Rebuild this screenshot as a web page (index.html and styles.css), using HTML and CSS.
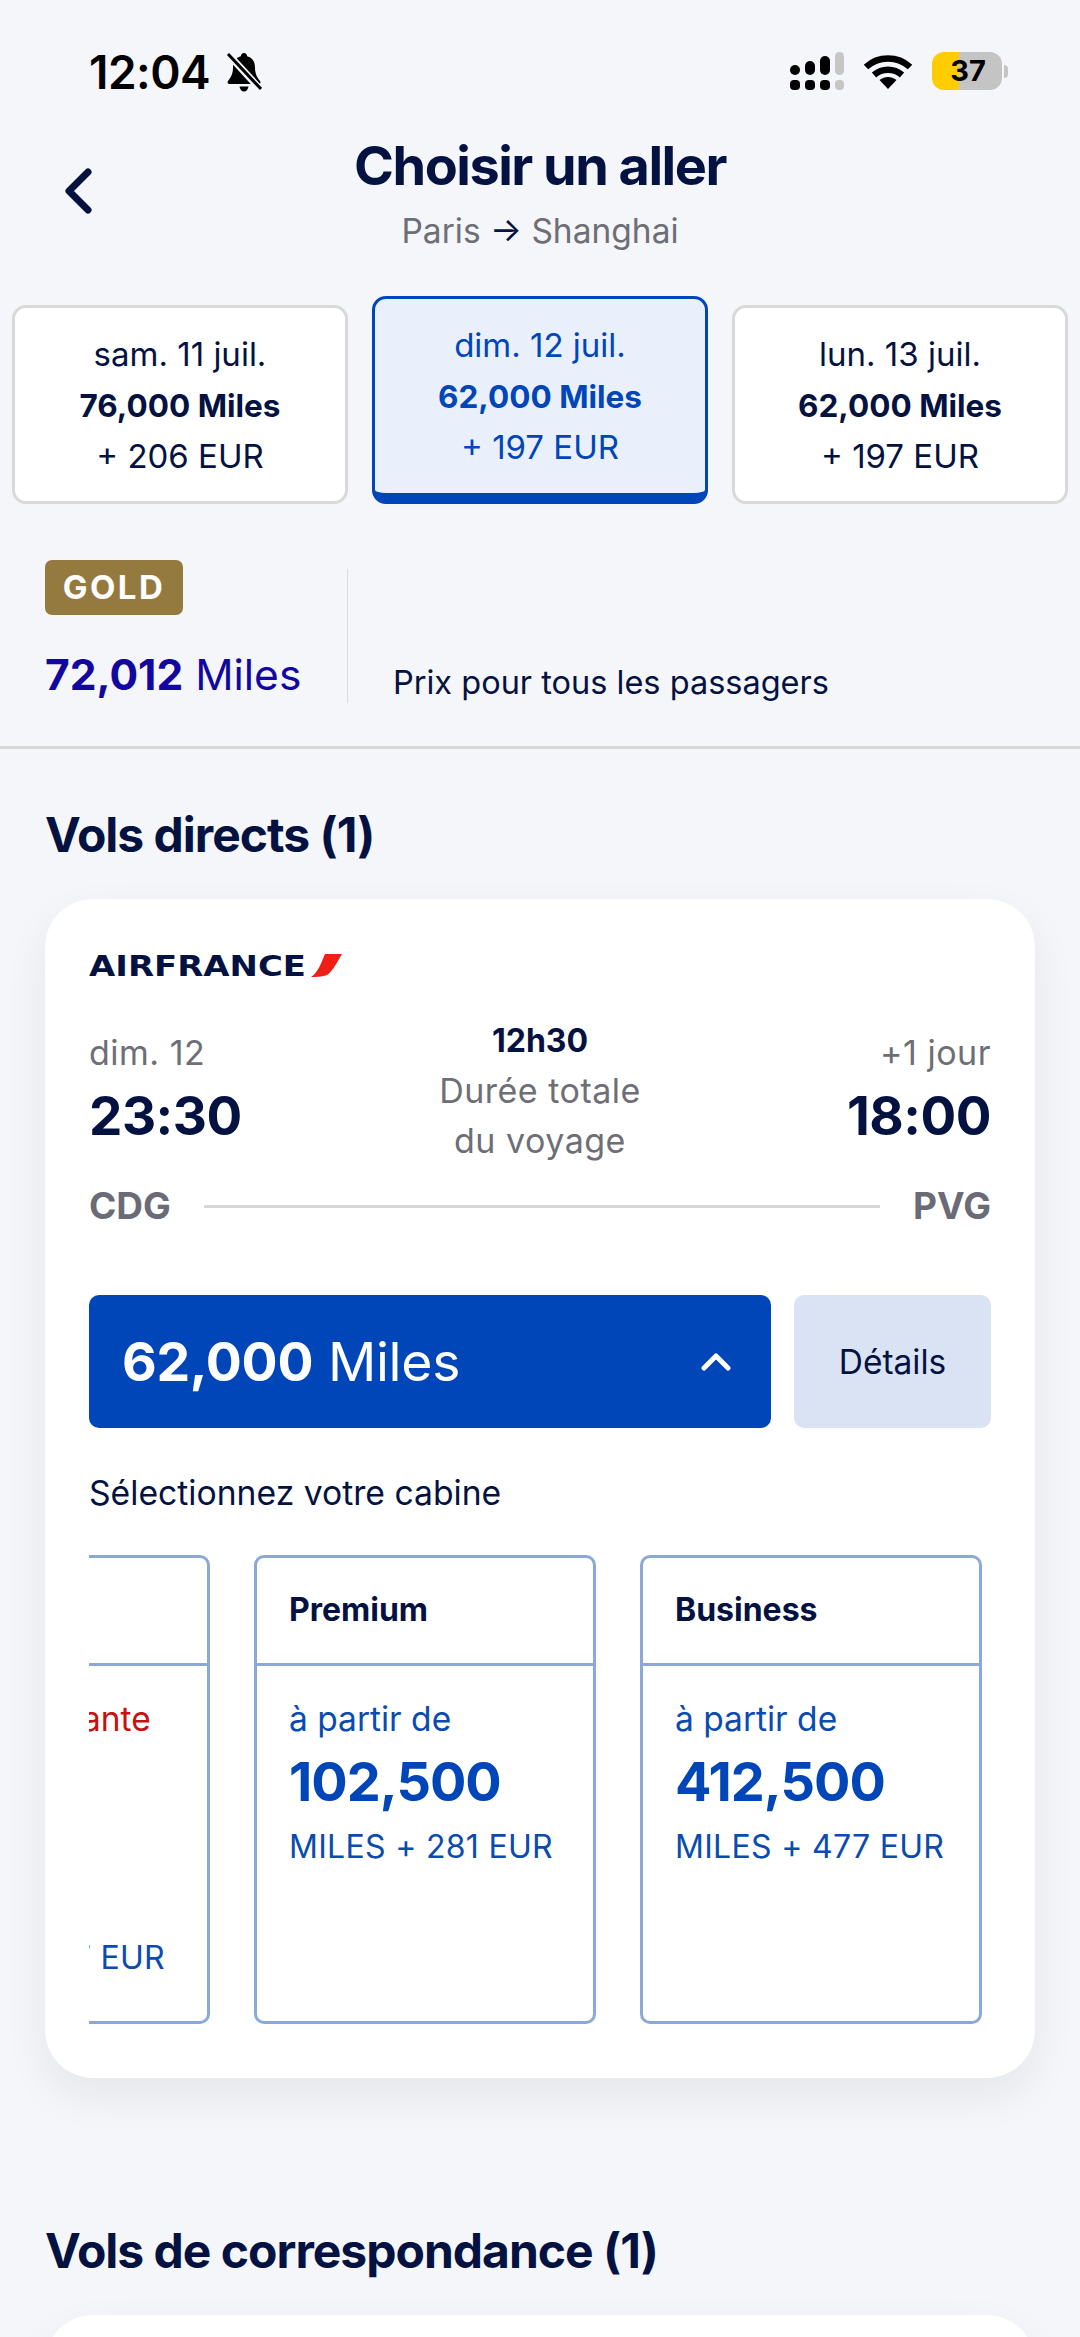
FILE: index.html
```html
<!DOCTYPE html>
<html lang="fr">
<head>
<meta charset="utf-8">
<title>Choisir un aller</title>
<link rel="stylesheet" href="styles.css">
</head>
<body>
<div class="status">
  <span class="clock">12:04</span>
  <svg class="bell" viewBox="0 0 36 39" aria-hidden="true">
    <path d="M18 0c2 0 3 1.500 3.200 3.300C26.500 4.700 29 9 29 14.500c0 6 1.800 9.500 5 13.500 1 1.500.2 3-1.500 3H3.500C1.800 31 1 29.500 2 28c3.200-4 5-7.500 5-13.500C7 9 9.500 4.700 14.800 3.300 15 1.500 16 0 18 0z" fill="#000"/>
    <path d="M13.500 33.500h9c-.5 3-2.300 5-4.500 5s-4-2-4.500-5z" fill="#000"/>
    <path d="M2 1l33 36" stroke="#f5f6f9" stroke-width="7" fill="none"/>
    <path d="M2 1l33 35" stroke="#000" stroke-width="3" fill="none"/>
  </svg>
  <span class="status-gap"></span>
  <svg class="signal" viewBox="0 0 54 38" aria-hidden="true">
    <rect x="0" y="13" width="10" height="10" rx="5" fill="#000"/>
    <rect x="15" y="9" width="10" height="14" rx="5" fill="#000"/>
    <rect x="30" y="4" width="10" height="19" rx="5" fill="#000"/>
    <rect x="45" y="0" width="9" height="23" rx="4.500" fill="#c6c6c6"/>
    <rect x="0" y="28" width="10" height="10" rx="4" fill="#000"/>
    <rect x="15" y="28" width="10" height="10" rx="4" fill="#000"/>
    <rect x="30" y="28" width="10" height="10" rx="4" fill="#000"/>
    <rect x="45" y="28" width="9" height="10" rx="4" fill="#c6c6c6"/>
  </svg>
  <svg class="wifi" viewBox="0 0 48 34" aria-hidden="true">
    <path d="M2 12C14 .5 34 .5 46 12" stroke="#000" stroke-width="6.500" fill="none"/>
    <path d="M10 20c8-7 20-7 28 0" stroke="#000" stroke-width="6.500" fill="none"/>
    <path d="M15.500 25c5-4 12-4 17 0L24 34z" fill="#000"/>
  </svg>
  <div class="battery"><span class="battery-level">37</span></div>
  <span class="battery-cap"></span>
</div>

<header class="header">
  <svg class="back" viewBox="0 0 28 46" aria-hidden="true">
    <path d="M24 4L5 23l19 19" stroke="#041241" stroke-width="7" stroke-linecap="round" stroke-linejoin="round" fill="none"/>
  </svg>
  <div class="heading">
    <h1 class="title">Choisir un aller</h1>
    <p class="route">Paris <span class="route-arrow">→</span> Shanghai</p>
  </div>
</header>

<div class="dates">
  <div class="date">
    <span>sam. 11 juil.</span>
    <strong>76,000 Miles</strong>
    <span>+ 206 EUR</span>
  </div>
  <div class="date date-active">
    <span>dim. 12 juil.</span>
    <strong>62,000 Miles</strong>
    <span>+ 197 EUR</span>
  </div>
  <div class="date">
    <span>lun. 13 juil.</span>
    <strong>62,000 Miles</strong>
    <span>+ 197 EUR</span>
  </div>
</div>

<section class="wallet">
  <div class="wallet-left">
    <span class="badge">GOLD</span>
    <p class="balance"><b>72,012</b> Miles</p>
  </div>
  <p class="note">Prix pour tous les passagers</p>
</section>

<h2 class="section-title first">Vols directs (1)</h2>
<article class="card">
  <div class="logo">
    <span class="logo-word">AIRFRANCE</span>
    <svg class="logo-flag" viewBox="0 0 31 23" aria-hidden="true">
      <path d="M14 0H31C28 5 24 13 19 18.500 16 22 11 23 0 23 7 19 11 7 14 0z" fill="#f01e14"/>
    </svg>
  </div>
  <div class="times">
    <div class="leg">
      <span class="muted">dim. 12</span>
      <span class="time">23:30</span>
    </div>
    <div class="duration">
      <strong>12h30</strong>
      <span class="muted">Durée totale</span>
      <span class="muted">du voyage</span>
    </div>
    <div class="leg leg-end">
      <span class="muted">+1 jour</span>
      <span class="time">18:00</span>
    </div>
  </div>
  <div class="airports">
    <span>CDG</span>
    <i class="airports-line"></i>
    <span>PVG</span>
  </div>
  <div class="actions">
    <div class="price-button">
      <span><b>62,000</b> Miles</span>
      <svg class="chev" viewBox="0 0 30 18" aria-hidden="true">
        <path d="M3 15L15 3l12 12" stroke="#fff" stroke-width="5" stroke-linecap="round" stroke-linejoin="round" fill="none"/>
      </svg>
    </div>
    <div class="details">Détails</div>
  </div>
  <p class="select">Sélectionnez votre cabine</p>
  <div class="cabins">
    <div class="cabin-track">
      <div class="cabin">
        <div class="cabin-head"></div>
        <div class="cabin-body">
          <p class="scarce">1 place restante</p>
          <p class="cabin-sum cabin-sum-low">MILES + 197 EUR</p>
        </div>
      </div>
      <div class="cabin">
        <div class="cabin-head">Premium</div>
        <div class="cabin-body">
          <p class="from">à partir de</p>
          <p class="amount">102,500</p>
          <p class="cabin-sum">MILES + 281 EUR</p>
        </div>
      </div>
      <div class="cabin">
        <div class="cabin-head">Business</div>
        <div class="cabin-body">
          <p class="from">à partir de</p>
          <p class="amount">412,500</p>
          <p class="cabin-sum">MILES + 477 EUR</p>
        </div>
      </div>
    </div>
  </div>
</article>

<h2 class="section-title second">Vols de correspondance (1)</h2>
<div class="card card-next"></div>
</body>
</html>
```

FILE: styles.css
```css
* { box-sizing: border-box; margin: 0; padding: 0; }
html, body { height: 2337px; overflow: hidden; }
body {
  width: 1080px;
  background: #f5f6f9;
  color: #041241;
  font-family: Inter, "Open Sans", sans-serif;
}
.status {
  display: flex;
  align-items: flex-start;
  height: 100px;
  padding: 49px 0 0 89px;
  color: #000;
}
.clock { font: 600 46px/46px Inter, sans-serif; letter-spacing: -.5px; }
.bell { width: 36px; height: 39px; margin: 4px 0 0 16px; }
.status-gap { flex: 1; }
.signal { width: 54px; height: 38px; margin-top: 3px; }
.wifi { width: 48px; height: 34px; margin: 6px 0 0 20px; }
.battery {
  width: 70px;
  height: 38px;
  margin: 3px 0 0 20px;
  border-radius: 12px;
  background: linear-gradient(to right, #ffcc00 27px, #c4c4c4 27px);
  text-align: center;
}
.battery-level { font: 700 29px/38px Inter, sans-serif; padding-left: 2px; }
.battery-cap {
  width: 4px;
  height: 13px;
  margin: 16px 72px 0 2px;
  background: #c4c4c4;
  border-radius: 0 4px 4px 0;
}

.header {
  display: grid;
  grid-template-columns: 1fr auto 1fr;
  height: 196px;
}
.back { width: 28px; height: 46px; margin: 68px 0 0 64px; }
.heading { grid-column: 2; text-align: center; padding-top: 36px; }
.title { font-size: 54px; line-height: 60px; font-weight: 700; letter-spacing: -1.5px; white-space: nowrap; }
.route { margin-top: 11px; font-size: 33.500px; line-height: 48px; color: #6d6e76; }
.route-arrow { color: #041241; }

.dates {
  display: flex;
  align-items: flex-end;
  gap: 24px;
  padding: 0 12px;
  height: 208px;
}
.date {
  flex: 1;
  display: flex;
  flex-direction: column;
  align-items: center;
  height: 199px;
  padding-top: 21px;
  background: #fff;
  border: 3px solid #d9d9d9;
  border-radius: 14px;
  font-size: 33px;
  line-height: 51px;
}
.date strong { font-size: 31.500px; font-weight: 700; }
.date-active {
  height: 208px;
  padding-top: 21px;
  background: #eaf0fb;
  border-color: #0046b8;
  border-bottom-width: 11px;
  color: #0046b8;
}

.wallet {
  display: flex;
  height: 245px;
  padding: 56px 0 0 45px;
  border-bottom: 3px solid #d8d8d8;
}
.wallet-left { width: 302px; }
.badge {
  display: block;
  width: 138px;
  height: 55px;
  border-radius: 7px;
  background: #957a3f;
  color: #fff;
  font-size: 33px;
  letter-spacing: 2.500px;
  font-weight: 700;
  line-height: 55px;
  text-align: center;
}
.balance { margin-top: 34px; font-size: 42.500px; line-height: 52px; color: #1208a0; }
.balance b { font-weight: 700; }
.note {
  height: 134px;
  margin-top: 9px;
  padding: 92px 0 0 45px;
  border-left: 1px solid #dcdcdc;
  font-size: 32.500px;
  line-height: 44px;
  white-space: nowrap;
}

.section-title { margin-left: 45px; font-size: 48px; line-height: 56px; font-weight: 700; letter-spacing: -1px; }
.first { margin-top: 58px; }
.second { margin-top: 145px; }
.card {
  width: 990px;
  margin-left: 45px;
  background: #fff;
  border-radius: 48px;
  box-shadow: 0 18px 44px rgba(20, 30, 60, .07);
}
.first + .card { margin-top: 36px; height: 1179px; padding: 55px 44px 0 44px; }
.card-next { margin-top: 36px; height: 300px; }

.logo { display: flex; align-items: flex-start; height: 26px; }
.logo-word {
  width: 222px;
  transform: scaleX(1.17);
  transform-origin: left center;
  font: 700 29px/24px "DejaVu Sans", sans-serif;
}
.logo-flag { width: 31px; height: 23px; margin-top: 0; }

.times { display: flex; justify-content: space-between; margin-top: 58px; }
.leg { display: flex; flex-direction: column; width: 250px; margin-top: -15px; }
.leg-end { align-items: flex-end; }
.muted { color: #6d6e76; font-size: 34px; letter-spacing: .5px; line-height: 50px; }
.leg .muted { line-height: 60px; }
.time { font-size: 53px; font-weight: 700; line-height: 66px; letter-spacing: -.5px; }
.duration { display: flex; flex-direction: column; align-items: center; margin-top: -22px; }
.duration strong { font-size: 32px; line-height: 50px; font-weight: 700; }

.airports {
  display: flex;
  align-items: center;
  gap: 33px;
  margin-top: 17px;
  color: #6a6b76;
  font-size: 37px;
  line-height: 46px;
  font-weight: 700;
}
.airports-line { flex: 1; height: 3px; background: #d6d6d6; }

.actions { display: flex; gap: 23px; margin-top: 66px; height: 133px; }
.price-button {
  flex: 1;
  display: flex;
  align-items: center;
  justify-content: space-between;
  padding: 0 40px 0 33px;
  background: #0046b8;
  border-radius: 10px;
  color: #fff;
  font-size: 53.500px;
  letter-spacing: -.3px;
}
.price-button b { font-weight: 700; }
.chev { width: 30px; height: 18px; }
.details {
  width: 197px;
  display: flex;
  align-items: center;
  justify-content: center;
  background: #d9e3f4;
  border-radius: 10px;
  font-size: 33.500px;
}
.select { margin-top: 45px; font-size: 33.700px; line-height: 40px; }

.cabins { overflow: hidden; margin-top: 42px; width: 902px; }
.cabin-track { display: flex; gap: 44px; margin-left: -221px; width: 1300px; }
.cabin {
  flex: none;
  width: 342px;
  height: 469px;
  border: 3px solid #8aa8d8;
  border-radius: 10px;
}
.cabin-head {
  height: 108px;
  padding-left: 32px;
  border-bottom: 3px solid #8aa8d8;
  font-size: 32px;
  line-height: 104px;
  font-weight: 700;
}
.cabin-body { padding: 31px 0 0 32px; color: #0a4bb0; }
.from { font-size: 33.500px; line-height: 44px; }
.amount { margin-top: 8px; font-size: 54px; line-height: 66px; font-weight: 700; color: #0046b8; letter-spacing: -1px; }
.cabin-sum { margin-top: 12px; font-size: 32px; line-height: 40px; white-space: nowrap; letter-spacing: .3px; }
.cabin-sum-low { margin-top: 197px; }
.scarce { color: #c8100e; font-size: 33.500px; line-height: 44px; white-space: nowrap; }
```
